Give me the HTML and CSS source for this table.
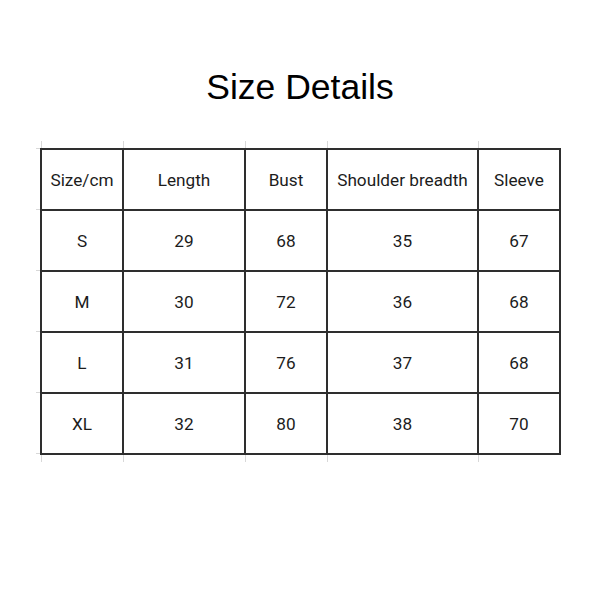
FILE: index.html
```html
<!DOCTYPE html>
<html>
<head>
<meta charset="utf-8">
<link rel="stylesheet" href="styles.css">
</head>
<body>
<h1 class="title">Size Details</h1>
<div class="grid-wrap">
<table class="size-table">
<colgroup>
<col class="c1"><col class="c2"><col class="c3"><col class="c4"><col class="c5">
</colgroup>
<tr><td>Size/cm</td><td>Length</td><td>Bust</td><td>Shoulder breadth</td><td>Sleeve</td></tr>
<tr><td>S</td><td>29</td><td>68</td><td>35</td><td>67</td></tr>
<tr><td>M</td><td>30</td><td>72</td><td>36</td><td>68</td></tr>
<tr><td>L</td><td>31</td><td>76</td><td>37</td><td>68</td></tr>
<tr><td>XL</td><td>32</td><td>80</td><td>38</td><td>70</td></tr>
</table>
</div>
</body>
</html>
```
FILE: styles.css
```css
html, body {
  margin: 0;
  padding: 0;
  background: #fff;
}
body {
  width: 600px;
  height: 600px;
  overflow: hidden;
}
.title {
  margin: 0;
  padding-top: 67px;
  font-family: "Liberation Sans", Arial, sans-serif;
  font-weight: normal;
  font-size: 35.5px;
  line-height: 40px;
  text-align: center;
  color: #000;
}
.grid-wrap {
  margin: 34px 0 0 36px;
  padding: 7px 0 7px 4px;
  width: 520px;
  background-image:
    linear-gradient(#d8d8d8, #d8d8d8),
    linear-gradient(#d8d8d8, #d8d8d8),
    linear-gradient(#d8d8d8, #d8d8d8),
    linear-gradient(#d8d8d8, #d8d8d8),
    linear-gradient(#d8d8d8, #d8d8d8),
    linear-gradient(#d8d8d8, #d8d8d8),
    linear-gradient(#d8d8d8, #d8d8d8),
    linear-gradient(#d8d8d8, #d8d8d8),
    linear-gradient(#d8d8d8, #d8d8d8),
    linear-gradient(#d8d8d8, #d8d8d8),
    linear-gradient(#d8d8d8, #d8d8d8),
    linear-gradient(#d8d8d8, #d8d8d8);
  background-repeat: no-repeat;
  background-size:
    1px 100%, 1px 100%, 1px 100%, 1px 100%, 1px 100%, 1px 100%,
    4px 1px, 4px 1px, 4px 1px, 4px 1px, 4px 1px, 4px 1px;
  background-position:
    5px 0, 87px 0, 209px 0, 291px 0, 442px 0, 524px 0,
    0 7px, 0 68px, 0 129px, 0 190px, 0 251px, 0 312px;
}
.size-table {
  border-collapse: collapse;
  table-layout: fixed;
  width: 519px;
  background: #fff;
  font-family: Roboto, "Noto Sans", sans-serif;
  font-size: 17.2px;
  color: #1c1c1c;
}
.c1 { width: 82px; }
.c2 { width: 122px; }
.c3 { width: 82px; }
.c4 { width: 151px; }
.c5 { width: 82px; }
.size-table td {
  border: 2px solid #2e2e2e;
  height: 58px;
  padding: 1px 0 0;
  text-align: center;
  vertical-align: middle;
  background: #fff;
  white-space: nowrap;
}
```
